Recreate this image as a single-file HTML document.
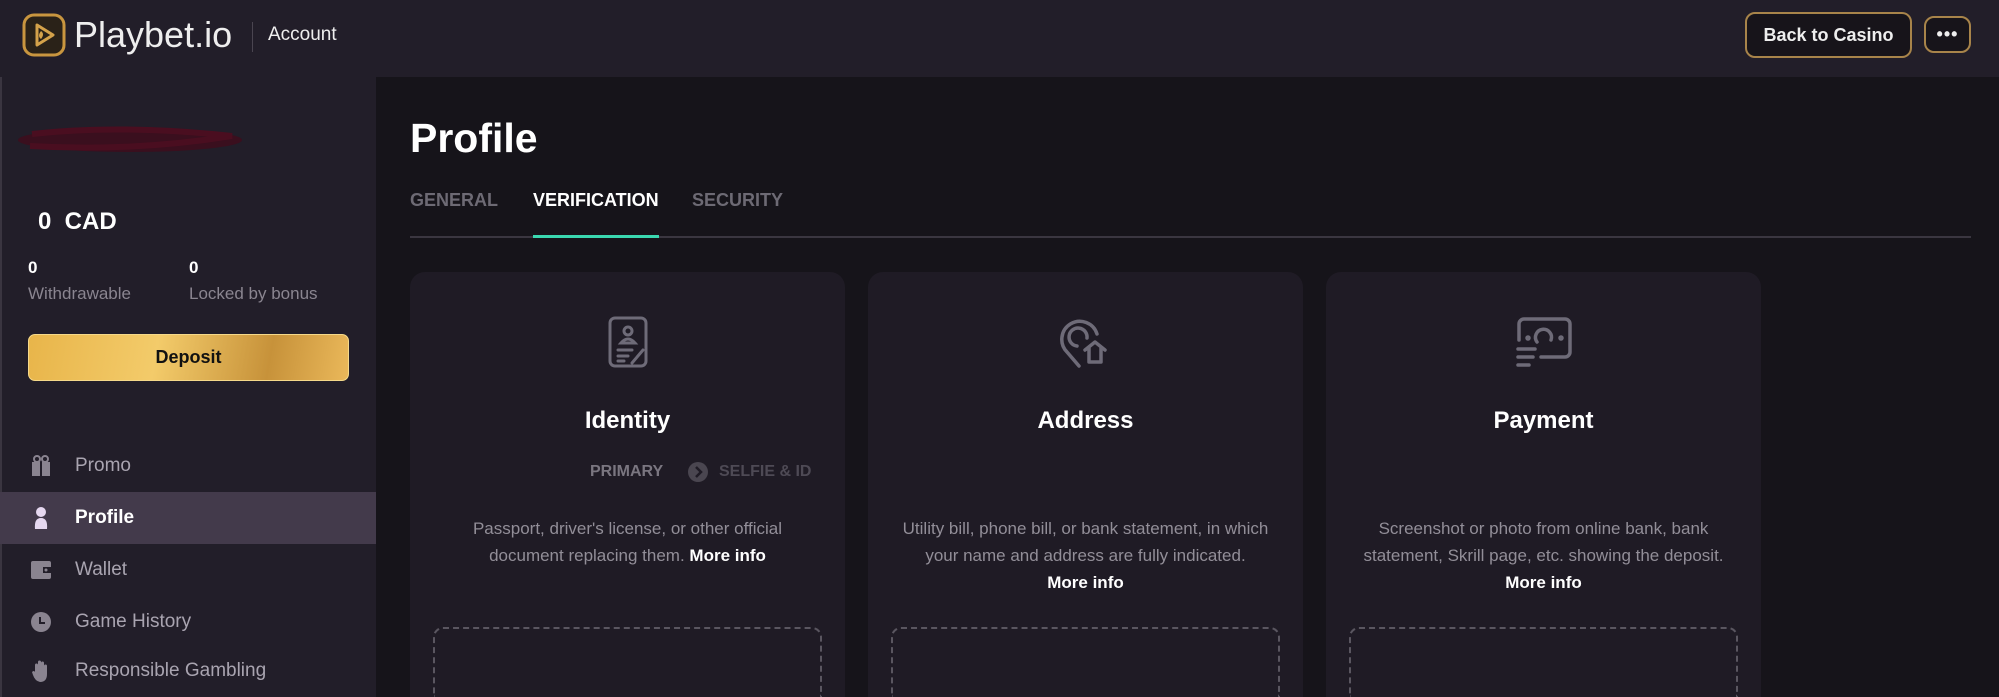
<!DOCTYPE html>
<html style="overflow:hidden;height:697px"><head><meta charset="utf-8"><style>
*{margin:0;padding:0;box-sizing:border-box}
html,body{overflow:hidden}
body{width:1999px;height:697px;background:#16141a;font-family:"Liberation Sans",sans-serif;color:#fff;position:relative}
.hdr{position:absolute;left:0;top:0;width:1999px;height:77px;background:#221e29}
.side{position:absolute;left:0;top:77px;width:376px;height:620px;background:#221e29;border-left:2px solid #3a3540}
.abs{position:absolute;white-space:nowrap}
.btn{position:absolute;border:2px solid #a8844a;border-radius:10px;background:#17141a;color:#eee;font-weight:bold;display:flex;align-items:center;justify-content:center}
.mi{position:absolute;left:0;width:376px;height:52px;display:flex;align-items:center;font-size:19px;color:#a9a4b0}
.mi .ic{width:22px;height:22px;margin-left:30px;margin-right:23px;display:flex;align-items:center;justify-content:center}
.tab{position:absolute;top:190px;font-size:18px;font-weight:bold;color:#6d6a74}
.card{position:absolute;top:272px;width:435px;height:425px;background:#1f1b25;border-radius:15px 15px 0 0;text-align:center;overflow:hidden}
.card .t{position:absolute;top:44px;left:0;width:100%;display:flex;justify-content:center}
.card h3{position:absolute;top:135px;width:100%;font-size:24px}
.desc{position:absolute;top:243px;left:0;width:100%;font-size:17px;line-height:27px;color:#928e98}
.desc b{color:#fff}
.dash{position:absolute;left:23px;right:23px;top:355px;height:70px;border:2px dashed #5a5660;border-bottom:none;border-radius:10px 10px 0 0}
</style></head><body>
<div class="hdr"></div>
<svg class="abs" style="left:22px;top:13px" width="44" height="44" viewBox="0 0 44 44"><rect x="2" y="2" width="40" height="40" rx="10" fill="#2a2218" stroke="#c9963f" stroke-width="3"/><path d="M15 12 L31 22 L15 32 Z" fill="none" stroke="#d4a24a" stroke-width="3" stroke-linejoin="round"/><path d="M19 18 q4 3 0 8 q-4-3 0-8z" fill="#d4a24a"/></svg>
<div class="abs" style="left:74px;top:14px;font-size:36px;color:#eee">Playbet.io</div>
<div class="abs" style="left:252px;top:22px;width:1px;height:30px;background:#4a4550"></div>
<div class="abs" style="left:268px;top:24px;font-size:19px;color:#eee">Account</div>
<div class="btn" style="left:1745px;top:12px;width:167px;height:46px;font-size:18px">Back to Casino</div>
<div class="btn" style="left:1924px;top:16px;width:47px;height:37px;font-size:18px;letter-spacing:1px">•••</div>

<div class="side"></div>
<svg class="abs" style="left:12px;top:122px" width="240" height="40"><ellipse cx="118" cy="18" rx="112" ry="12" fill="#3a0f1e"/><path d="M20 12 Q110 2 220 14 Q120 30 18 24" fill="none" stroke="#4a0e20" stroke-width="6"/></svg>
<div class="abs" style="left:38px;top:208px;font-size:24px;font-weight:bold">0 &nbsp;CAD</div>
<div class="abs" style="left:28px;top:258px;font-size:17px;font-weight:bold">0</div>
<div class="abs" style="left:28px;top:284px;font-size:17px;color:#8a8590">Withdrawable</div>
<div class="abs" style="left:189px;top:258px;font-size:17px;font-weight:bold">0</div>
<div class="abs" style="left:189px;top:284px;font-size:17px;color:#8a8590">Locked by bonus</div>
<div class="abs" style="left:28px;top:334px;width:321px;height:47px;border-radius:7px;background:linear-gradient(100deg,#e8b54a,#f3cb6a 40%,#c7923a 75%,#eab85a);border:1px solid #f5d98a;color:#111;font-weight:bold;font-size:18px;display:flex;align-items:center;justify-content:center">Deposit</div>

<div class="mi" style="top:440px"><div class="ic"><svg width="20" height="22"><rect x="1" y="7" width="18" height="14" fill="#8a8490"/><rect x="9" y="7" width="2" height="14" fill="#221e29"/><circle cx="6" cy="4" r="3" fill="none" stroke="#8a8490" stroke-width="2"/><circle cx="14" cy="4" r="3" fill="none" stroke="#8a8490" stroke-width="2"/></svg></div>Promo</div>
<div class="mi" style="top:492px;background:#433a4b;color:#fff;font-weight:bold"><div class="ic"><svg width="16" height="22"><circle cx="8" cy="5" r="5" fill="#e6d8f0"/><path d="M2 22 Q1 11 8 11 Q15 11 14 22Z" fill="#e6d8f0"/></svg></div>Profile</div>
<div class="mi" style="top:544px"><div class="ic"><svg width="20" height="20"><rect x="0" y="1" width="20" height="18" rx="2" fill="#8a8490"/><rect x="12" y="7" width="8" height="6" fill="#221e29"/><circle cx="15" cy="10" r="1.5" fill="#8a8490"/></svg></div>Wallet</div>
<div class="mi" style="top:596px"><div class="ic"><svg width="20" height="20"><circle cx="10" cy="10" r="10" fill="#8a8490"/><path d="M9 5 V11 H14" fill="none" stroke="#221e29" stroke-width="2"/></svg></div>Game History</div>
<div class="mi" style="top:645px;height:52px"><div class="ic"><svg width="18" height="22"><path d="M3 12 V5 a1.5 1.5 0 0 1 3 0 V10 V2 a1.5 1.5 0 0 1 3 0 V10 V3 a1.5 1.5 0 0 1 3 0 V11 V6 a1.5 1.5 0 0 1 3 0 V14 Q15 22 8 22 Q3 21 1 15 L0 12 Q2 10 3 12Z" fill="#8a8490"/></svg></div>Responsible Gambling</div>

<div class="abs" style="left:410px;top:115px;font-size:41px;font-weight:bold">Profile</div>
<div class="tab" style="left:410px">GENERAL</div>
<div class="tab" style="left:533px;color:#fff">VERIFICATION</div>
<div class="tab" style="left:692px">SECURITY</div>
<div class="abs" style="left:410px;top:236px;width:1561px;height:2px;background:#3a3640"></div>
<div class="abs" style="left:533px;top:235px;width:126px;height:3px;background:#3ad8b0"></div>

<div class="card" style="left:410px">
 <div class="t"><svg width="44" height="52" viewBox="0 0 44 52" fill="none" stroke="#6e6b78" stroke-width="3" stroke-linecap="round"><rect x="4" y="2" width="36" height="48" rx="5"/><circle cx="22" cy="15" r="4"/><path d="M15 27 q7-8 14 0 z"/><path d="M12 34 H26 M12 40 H22 M12 45 H18"/><path d="M26 47 L37 34"/></svg></div>
 <h3>Identity</h3>
 <div class="abs" style="top:191px;left:180px;font-size:16px;font-weight:bold;color:#7a7680">PRIMARY</div>
 <svg class="abs" style="left:278px;top:190px" width="20" height="20"><circle cx="10" cy="10" r="10" fill="#4a4650"/><path d="M8 5 L13 10 L8 15" fill="none" stroke="#1f1b25" stroke-width="2.5"/></svg>
 <div class="abs" style="top:191px;left:309px;font-size:16px;font-weight:bold;color:#4e4a55">SELFIE &amp; ID</div>
 <div class="desc">Passport, driver's license, or other official<br>document replacing them. <b>More info</b></div>
 <div class="dash"></div>
</div>
<div class="card" style="left:868px">
 <div class="t"><svg width="54" height="52" viewBox="0 0 54 52" fill="none" stroke="#6e6b78" stroke-width="3.5" stroke-linecap="round" stroke-linejoin="round"><path d="M20 50 L8 36 A18 18 0 1 1 38 18"/><path d="M28 22 A9 9 0 1 0 18 30"/><path d="M26 34 L36 26 L46 34 M30 32 V46 H42 V32"/></svg></div>
 <h3>Address</h3>
 <div class="desc">Utility bill, phone bill, or bank statement, in which<br>your name and address are fully indicated.<br><b>More info</b></div>
 <div class="dash"></div>
</div>
<div class="card" style="left:1326px">
 <div class="t"><svg width="58" height="52" viewBox="0 0 58 52" fill="none" stroke="#6e6b78" stroke-width="3.5" stroke-linecap="round"><path d="M4 24 V8 a5 5 0 0 1 5-5 H50 a5 5 0 0 1 5 5 V36 a5 5 0 0 1-5 5 H26"/><path d="M22 26 A8 8 0 1 1 36 24"/><circle cx="13" cy="22" r="1" fill="#6e6b78"/><circle cx="46" cy="22" r="1" fill="#6e6b78"/><path d="M3 33 H20 M3 41 H18 M3 49 H14"/></svg></div>
 <h3>Payment</h3>
 <div class="desc">Screenshot or photo from online bank, bank<br>statement, Skrill page, etc. showing the deposit.<br><b>More info</b></div>
 <div class="dash"></div>
</div>
</body></html>
